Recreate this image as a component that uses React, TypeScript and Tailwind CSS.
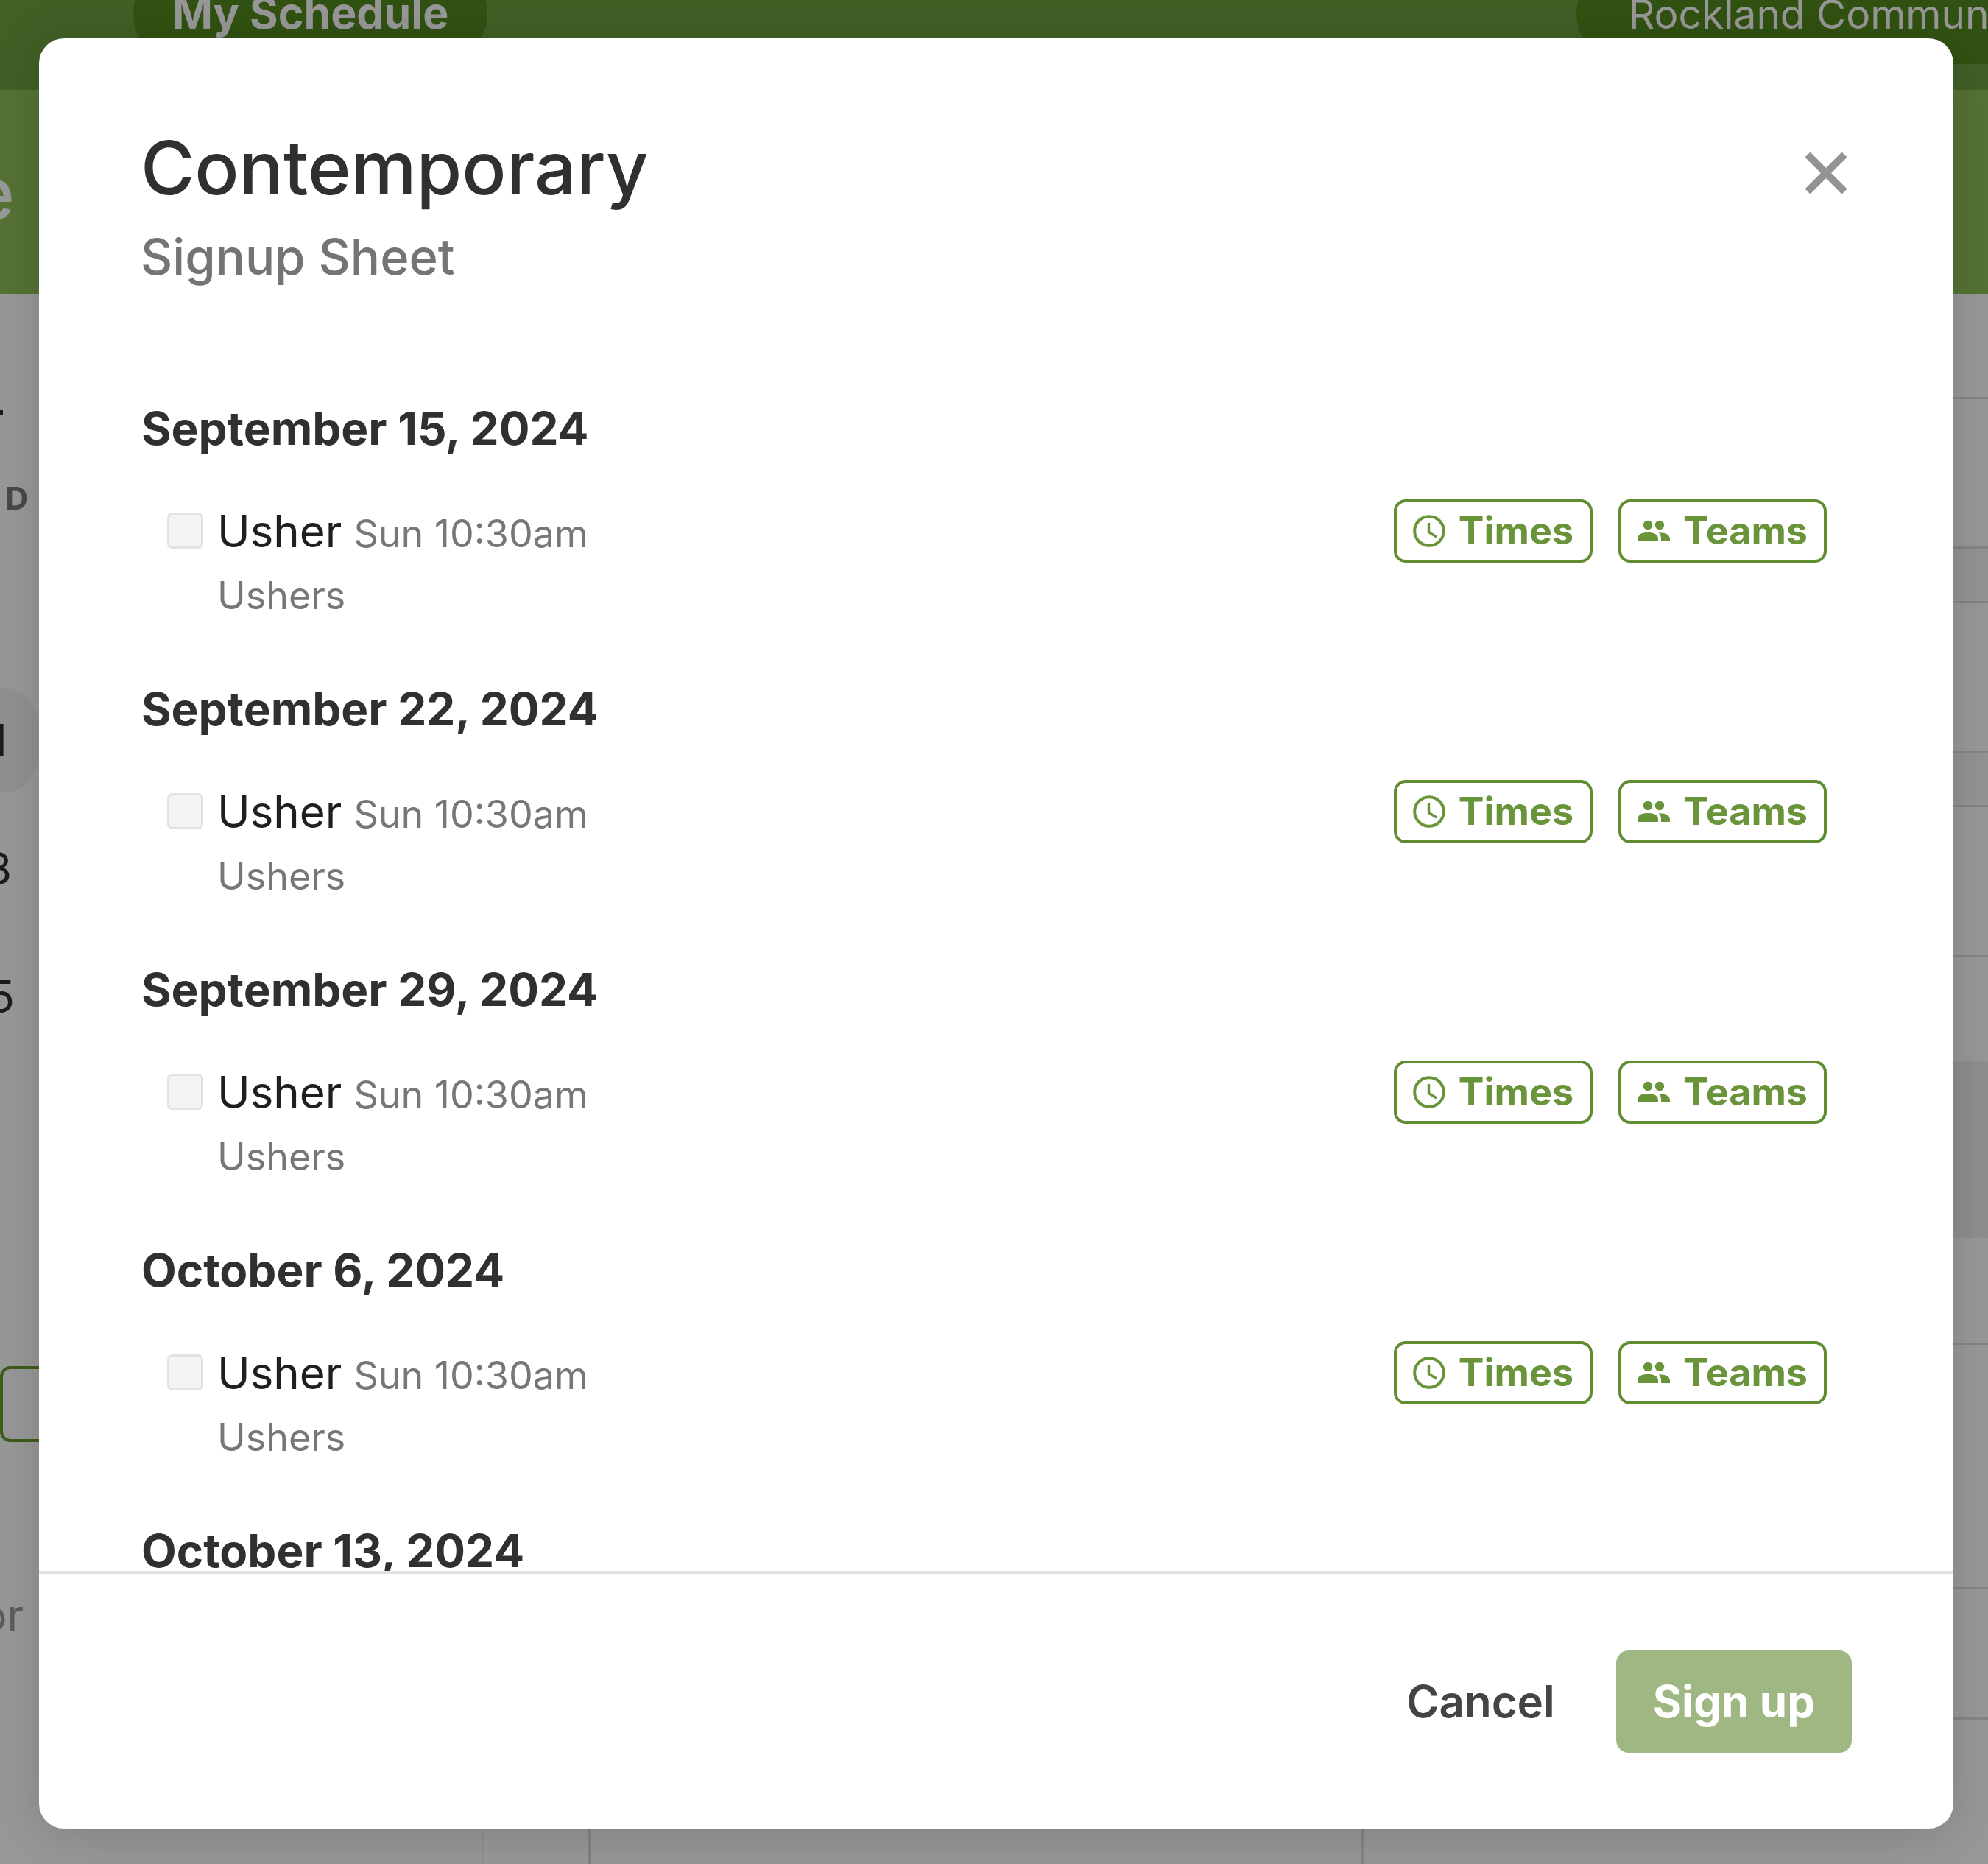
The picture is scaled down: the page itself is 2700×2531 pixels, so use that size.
import React from "react";

const dates = [
  "September 15, 2024",
  "September 22, 2024",
  "September 29, 2024",
  "October 6, 2024",
  "October 13, 2024",
];

function ClockIcon() {
  return (
    <svg viewBox="0 0 44 44" className="size-[44px] shrink-0" fill="none" stroke="currentColor" aria-hidden="true">
      <circle cx="22" cy="22" r="19.8" strokeWidth="4" />
      <path d="M21.500 11v12.500l10.500 6.500" strokeWidth="3.400" />
    </svg>
  );
}

function PeopleIcon() {
  return (
    <svg viewBox="0 0 44 44" className="size-[44px] shrink-0" fill="currentColor" aria-hidden="true">
      <circle cx="14" cy="14" r="6.200" />
      <circle cx="30" cy="14" r="6.200" />
      <path d="M0 36v-3.500C0 26.500 6 24 14 24s14 2.500 14 8.500V36z" />
      <path d="M28.500 24.200C38 24 44 27 44 32.500V36H32v-3.500c0-3.800-1-6.300-3.500-8.300z" />
    </svg>
  );
}

function CloseIcon() {
  return (
    <svg viewBox="0 0 58 58" className="size-[58px]" fill="none" stroke="currentColor" strokeWidth="10" aria-hidden="true">
      <path d="M4 4l50 50M54 4L4 54" />
    </svg>
  );
}

function OutlineButton({ icon, children }: { icon: React.ReactNode; children: React.ReactNode }) {
  return (
    <button
      type="button"
      className="flex h-[86px] items-center gap-[18px] rounded-[16px] border-4 border-[#5f8d2f] px-[22px] text-[52px] leading-none font-bold text-[#69943a]"
    >
      {icon}
      {children}
    </button>
  );
}

function SignupRow({ date, id }: { date: string; id: string }) {
  return (
    <section className="h-[381px] shrink-0">
      <h2 className="text-[62px] leading-[72px] font-bold text-[#303030]">{date}</h2>
      <div className="mt-[60px] flex items-start pr-[33px] pl-[35px]">
        <input
          id={id}
          type="checkbox"
          className="mt-[18px] size-[49px] shrink-0 appearance-none rounded-[7px] border-3 border-[#e2e2e2] bg-[#f4f4f4]"
        />
        <label htmlFor={id} className="ml-[19px] flex-1">
          <span className="block leading-[86px]">
            <span className="text-[60px] text-[#1f1f1f]">Usher</span>
            <span className="ml-[16px] text-[52px] text-[#777]">Sun 10:30am</span>
          </span>
          <span className="block text-[52px] leading-[58px] text-[#777]">Ushers</span>
        </label>
        <div className="flex gap-[35px]">
          <OutlineButton icon={<ClockIcon />}>Times</OutlineButton>
          <OutlineButton icon={<PeopleIcon />}>Teams</OutlineButton>
        </div>
      </div>
    </section>
  );
}

function Sidebar() {
  return (
    <aside className="w-[658px] shrink-0 border-r-4 border-[#919191] pt-[158px] text-[60px] leading-[72px] text-[#1c1c1c]">
      <div className="h-[6px] w-1 bg-[#1c1c1c]" />
      <div className="mt-[81px] flex w-[38px] justify-end text-[43px] leading-[64px] font-bold text-[#484848]">D</div>
      <div className="mt-[225px] flex w-[53px] flex-col gap-[30px]">
        <div className="flex h-[144px] items-center rounded-r-full bg-[#919191]">
          <span className="flex w-[10px] justify-end">1</span>
        </div>
        <div className="flex h-[144px] items-center">
          <span className="flex w-[16px] justify-end">8</span>
        </div>
        <div className="flex h-[144px] items-center">
          <span className="flex w-[20px] justify-end">5</span>
        </div>
      </div>
      <div className="mt-[430px] h-[103px] rounded-l-[14px] border-4 border-[#3c5c1c]" />
      <div className="mt-[199px] flex w-[32px] justify-end text-[#5c5c5c]">or</div>
    </aside>
  );
}

function Agenda() {
  return (
    <main className="flex flex-1 pl-[140px]">
      <div className="flex flex-1 flex-col border-l-4 border-[#838383]">
        <div className="h-[140px]" />
        <div className="h-[203px] border-t-3 border-[#858585]" />
        <div className="h-[74px] border-t-3 border-[#858585] bg-[#949494]" />
        <div className="h-[204px] border-t-3 border-[#858585]" />
        <div className="h-[73px] border-t-3 border-[#858585] bg-[#949494]" />
        <div className="h-[204px] border-t-3 border-[#858585]" />
        <div className="h-[143px] border-t-3 border-[#858585]" />
        <div className="h-[241px] bg-[#8f8f8f]" />
        <div className="h-[142px]" />
        <div className="h-[332px] border-t-3 border-[#858585]" />
        <div className="h-[177px] border-t-3 border-[#858585]" />
        <div className="flex flex-1 border-t-3 border-[#858585]">
          <div className="w-[1051px] border-r-4 border-[#858585]" />
          <div className="flex-1" />
        </div>
      </div>
    </main>
  );
}

export default function App() {
  return (
    <div className="relative flex h-screen flex-col overflow-hidden bg-[#989898] font-['Inter',sans-serif]">
      <header className="flex h-[122px] shrink-0 items-start justify-between bg-[#425f26] text-[55px] text-[#989898]">
        <a
          href="#schedule"
          className="-mt-[50px] ml-[181px] flex h-[137px] items-center rounded-full bg-[#315212] px-[53px] text-[59px] font-bold"
        >
          My Schedule
        </a>
        <div className="-mt-[50px] h-[137px] w-[559px] overflow-hidden rounded-l-full bg-[#315212] pl-[71px] leading-[138px] whitespace-nowrap">
          Rockland Commun
        </div>
      </header>
      <div className="flex h-[277px] shrink-0 items-start bg-[#557334] pt-[82px] text-[#989898]">
        <span className="flex w-[20px] justify-end text-[100px] leading-[116px] font-medium">e</span>
      </div>
      <div className="flex flex-1">
        <Sidebar />
        <Agenda />
      </div>

      <div
        className="absolute top-[52px] right-[47px] bottom-[48px] left-[53px] flex flex-col overflow-hidden rounded-[34px] bg-white shadow-[0_8px_70px_rgba(0,0,0,0.16)]"
        role="dialog"
        aria-labelledby="dialog-title"
      >
        <div className="flex shrink-0 items-start justify-between px-[138px] pt-[108px]">
          <div>
            <h1 id="dialog-title" className="text-[100px] leading-[136px] font-medium text-[#303030]">Contemporary</h1>
            <p className="text-[67px] leading-[106px] font-medium text-[#737575]">Signup Sheet</p>
          </div>
          <button type="button" aria-label="Close" className="mt-[46px] mr-[6px] text-[#929494]">
            <CloseIcon />
          </button>
        </div>
        <div className="flex min-h-0 flex-1 flex-col overflow-hidden px-[139px] pt-[144px]">
          {dates.map((date, i) => (
            <SignupRow key={date} date={date} id={`usher-${i}`} />
          ))}
        </div>
        <footer className="flex h-[350px] shrink-0 items-center justify-end gap-[83px] border-t-4 border-[#e2e2e2] px-[138px] text-[60px]">
          <button type="button" className="font-semibold text-[#444]">Cancel</button>
          <button type="button" className="h-[139px] rounded-[17px] bg-[#9fb883] px-[50px] font-bold text-white">Sign up</button>
        </footer>
      </div>
    </div>
  );
}
